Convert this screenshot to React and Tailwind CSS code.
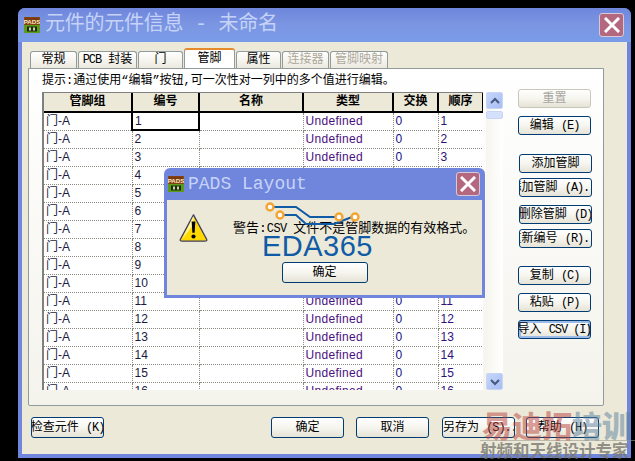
const cjk = { fontFamily: '"Liberation Mono","Noto Sans CJK SC",monospace' };

function L({ children }) {
  return <span className="text-[12px] tracking-[-1.1px]">{children}</span>;
}

function PadsIcon({ className }) {
  return (
    <svg viewBox="0 0 16 16" className={className}>
      <rect x="0" y="0" width="16" height="16" fill="#8a4a16" />
      <rect x="1" y="0.5" width="14" height="7" fill="#7a3a10" />
      <text x="8" y="6.6" textAnchor="middle" fontSize="6.2" fontWeight="700" fill="#ffe9c0" fontFamily="Liberation Sans">PADS</text>
      <rect x="0" y="8" width="16" height="8" fill="#5c9a1c" />
      <rect x="3" y="9.5" width="10" height="5" fill="#1c2c10" />
      <rect x="5" y="10.5" width="2" height="3" fill="#c8d8a0" />
      <rect x="9" y="10.5" width="2" height="3" fill="#c8d8a0" />
    </svg>
  );
}

function CloseBtn({ className }) {
  return (
    <div className={"flex items-center justify-center rounded-[3px] border border-[#d8c8d8] bg-[#b4687f] " + className}>
      <svg viewBox="0 0 16 16" className="h-[16px] w-[16px]">
        <path d="M2 2 L14 14 M14 2 L2 14" stroke="#ffffff" strokeWidth="3" strokeLinecap="square" />
      </svg>
    </div>
  );
}

function Btn({ children, className = "", disabled, def, center = true }) {
  return (
    <div
      style={cjk}
      className={
        "flex h-[19px] w-[73px] items-center overflow-hidden whitespace-nowrap rounded-[3px] border bg-gradient-to-b from-white via-[#f6f5ef] to-[#e6e3d6] text-[12px] leading-none " +
        (center ? "justify-center " : "") +
        (disabled ? "border-[#c9c7ba] text-[#a7a6a0] " : "border-[#003c74] text-black ") +
        (def ? "shadow-[inset_0_0_0_2px_#9dbbe8] " : "") +
        className
      }
    >
      <span className="shrink-0">{children}</span>
    </div>
  );
}

function Tab({ w, children, active, disabled }) {
  return (
    <div
      style={{ width: w, ...cjk }}
      className={
        "flex items-center justify-center whitespace-nowrap rounded-t-[3px] border border-b-0 text-[12px] leading-none " +
        (active
          ? "h-[20px] border-[#919b9c] border-t-[#e68b2c] border-t-2 bg-white text-black "
          : "h-[17px] border-[#919b9c] bg-gradient-to-b from-white to-[#ece9df] " + (disabled ? "text-[#aca899] " : "text-black "))
      }
    >
      {children}
    </div>
  );
}

const headers = ["管脚组", "编号", "名称", "类型", "交换", "顺序"];

const rows = Array.from({ length: 16 }, (_, i) => i + 1);

function GridTable() {
  return (
    <div className="h-[298px] w-[441px] overflow-hidden border-l-2 border-t border-l-[#808080] border-t-[#808080]">
      <table className="w-[439px] table-fixed border-collapse bg-white">
        <colgroup>
          <col className="w-[88px]" />
          <col className="w-[67px]" />
          <col className="w-[104px]" />
          <col className="w-[90px]" />
          <col className="w-[45px]" />
          <col className="w-[45px]" />
        </colgroup>
        <thead>
          <tr className="h-[19px]">
            {headers.map((h) => (
              <th
                key={h}
                style={cjk}
                className="border-b-2 border-r-2 border-black bg-[#ece9d8] p-0 text-center text-[12px] font-bold leading-none text-black"
              >
                {h}
              </th>
            ))}
          </tr>
        </thead>
        <tbody className="font-['Liberation_Sans',sans-serif] text-[12px] leading-none">
          {rows.map((n) => (
            <tr key={n} className="h-[18px]">
              <td className="border-b border-r border-dotted border-[#8a8a80] p-0 pl-[2px] text-[#1a1a40]" style={{ fontFamily: '"Liberation Sans","Noto Sans CJK SC",sans-serif' }}>门-A</td>
              <td className={"p-0 pl-[2px] text-[#1a1a40] " + (n === 1 ? "border-2 border-black" : "border-b border-r border-dotted border-[#8a8a80]")}>{n}</td>
              <td className="border-b border-r border-dotted border-[#8a8a80] p-0"></td>
              <td className="border-b border-r border-dotted border-[#8a8a80] p-0 pl-[2px] tracking-[0.3px] text-[#4b0f7f]">Undefined</td>
              <td className="border-b border-r border-dotted border-[#8a8a80] p-0 pl-[2px] text-[#10108a]">0</td>
              <td className="border-b border-r border-dotted border-[#8a8a80] p-0 pl-[2px] text-[#30107a]">{n}</td>
            </tr>
          ))}
        </tbody>
      </table>
    </div>
  );
}

function ScrollBtn({ down }) {
  return (
    <div className="flex h-[17px] w-[17px] items-center justify-center rounded-[2px] border border-[#c8d6f5] bg-gradient-to-br from-[#c6d6fb] to-[#a8bef2]">
      <svg viewBox="0 0 10 8" className="h-[8px] w-[10px]">
        <path d={down ? "M1 2 L5 6 L9 2" : "M1 6 L5 2 L9 6"} stroke="#44597f" strokeWidth="2" fill="none" />
      </svg>
    </div>
  );
}

function Scrollbar() {
  return (
    <div className="ml-[3px] flex h-[298px] w-[17px] flex-col bg-gradient-to-r from-[#f6f5ee] to-white">
      <ScrollBtn />
      <div className="mt-[2px] h-[8px] rounded-[2px] border border-[#c8d6f5] bg-[#d5e0fb]"></div>
      <div className="flex-1"></div>
      <ScrollBtn down />
    </div>
  );
}

function SideButtons() {
  return (
    <div className="ml-[15px] -mt-[3px] flex w-[74px] flex-col">
      <Btn disabled>重置</Btn>
      <Btn className="mt-[8px]">编辑 <L>(E)</L></Btn>
      <Btn className="ml-[1px] mt-[19px]">添加管脚</Btn>
      <Btn className="ml-[1px] mt-[5px]">添加管脚 <L>(A)...</L></Btn>
      <Btn className="ml-[1px] mt-[8px]">删除管脚 <L>(D)</L></Btn>
      <Btn className="ml-[1px] mt-[5px]">重新编号 <L>(R)...</L></Btn>
      <Btn className="mt-[18px]">复制 <L>(C)</L></Btn>
      <Btn className="mt-[8px]">粘贴 <L>(P)</L></Btn>
      <Btn className="mt-[8px]" def>导入 <L>CSV (I)</L></Btn>
    </div>
  );
}

function Dialog() {
  return (
    <div className="absolute left-[164px] top-[168px] h-[130px] w-[321px] rounded-t-[6px] bg-[#6f86dc] px-[3px] pb-[3px]">
      <div className="flex h-[32px] items-center">
        <PadsIcon className="ml-[1px] h-[16px] w-[16px]" />
        <span className="ml-[4px] whitespace-nowrap font-['Liberation_Mono',monospace] text-[18px] leading-none text-[#c6d3f8]">PADS Layout</span>
        <CloseBtn className="ml-auto mr-[2px] h-[24px] w-[24px]" />
      </div>
      <div className="relative flex h-[95px] flex-col items-center bg-[#ece9d8]">
        <div className="flex w-full items-center pl-[11px] pt-[13px]">
          <svg viewBox="0 0 32 32" className="h-[30px] w-[31px]">
            <path d="M16 2 L30 28 Q31 30 28 30 L4 30 Q1 30 2 28 Z" fill="#ffd800" stroke="#3c3c6a" strokeWidth="1.4" strokeLinejoin="round" />
            <path d="M16 3 L4 28 L16 12 Z" fill="#fff6a8" />
            <path d="M14 9 h4 l-0.8 12 h-2.4 Z" fill="#000" />
            <circle cx="16" cy="25" r="2.2" fill="#000" />
          </svg>
          <span style={cjk} className="ml-[24px] whitespace-nowrap text-[13px] leading-none text-black">警告:<span className="text-[12px] tracking-[-0.6px]">CSV </span>文件不是管脚数据的有效格式。</span>
        </div>
        <div className="-mt-[7px] h-[21px] -translate-x-[7px] font-['Liberation_Sans',sans-serif] text-[29px] font-normal leading-[21px] tracking-[0.5px] text-[#0f5ba6]">EDA365</div>
        <Btn className="mt-[5px] h-[21px] w-[86px]">确定</Btn>
        <svg className="absolute left-[97px] top-0 h-[30px] w-[100px]" viewBox="0 0 100 30" fill="none">
          <path d="M6 7 H32 L46 17 H76" stroke="#0f5ba6" strokeWidth="2" />
          <path d="M16 15 H32 L42 24 H70 L88 17" stroke="#0f5ba6" strokeWidth="2" />
          <circle cx="6" cy="7" r="3.5" fill="#fff" stroke="#f3a431" strokeWidth="2.4" />
          <circle cx="16" cy="15" r="3.5" fill="#fff" stroke="#f3a431" strokeWidth="2.4" />
          <circle cx="75" cy="17" r="3.5" fill="#fff" stroke="#f3a431" strokeWidth="2.4" />
          <circle cx="91" cy="17" r="3.5" fill="#fff" stroke="#f3a431" strokeWidth="2.4" />
        </svg>
      </div>
    </div>
  );
}

function Watermark() {
  return (
    <div className="absolute left-[480px] top-[408px] w-[155px] overflow-hidden" style={{ fontFamily: '"Noto Sans CJK SC",sans-serif' }}>
      <div className="flex h-[31px] items-center whitespace-nowrap pl-[2px] text-[30px] font-black leading-none">
        <span className="text-[#b8413a]/50">易迪拓</span>
        <span className="text-[#5a7f9c]/50">培训</span>
      </div>
      <div className="mt-[1px] h-px w-full bg-[#9a9a90]/60"></div>
      <div className="whitespace-nowrap text-[16.5px] font-bold leading-[19px] text-[#77776f]/80">射频和天线设计专家</div>
    </div>
  );
}

export default function App() {
  return (
    <div className="relative h-[461px] w-[635px] overflow-hidden bg-black pl-[18px] pt-[8px]">
      <div className="h-[450px] w-[613px] rounded-t-[7px] bg-[#6f86dc] px-[4px] pb-[4px]">
        <div className="-mx-[4px] flex h-[34px] items-center rounded-t-[7px] bg-gradient-to-b from-[#6f86dc] via-[#7b96e2] to-[#7a9ce8] px-[6px]">
          <PadsIcon className="h-[16px] w-[16px]" />
          <span className="ml-[5px] whitespace-nowrap text-[20px] leading-none tracking-[-0.25px] text-[#c6d3f8]" style={cjk}>元件的元件信息 - 未命名</span>
          <CloseBtn className="ml-auto mr-[1px] h-[24px] w-[25px]" />
        </div>
        <div className="h-[412px] bg-[#ece9d8] pl-[6px] pt-[7px]">
          <div className="flex h-[19px] items-end gap-[1px] pl-[2px]">
            <Tab w={47}>常规</Tab>
            <Tab w={59}><L>PCB</L>&nbsp;封装</Tab>
            <Tab w={45}>门</Tab>
            <Tab w={51} active>管脚</Tab>
            <Tab w={45}>属性</Tab>
            <Tab w={47} disabled>连接器</Tab>
            <Tab w={58} disabled>管脚映射</Tab>
          </div>
          <div className="h-[338px] w-[576px] rounded-b-[2px] border border-[#919b9c] bg-gradient-to-b from-white to-[#f4f3ec] pl-[13px]">
            <div style={cjk} className="flex h-[23px] items-center whitespace-nowrap text-[12px] leading-none text-black">提示:通过使用“编辑”按钮,可一次性对一列中的多个值进行编辑。</div>
            <div className="flex">
              <GridTable />
              <Scrollbar />
              <SideButtons />
            </div>
          </div>
          <div className="flex pl-[3px] pt-[11px]">
            <Btn className="h-[21px]">检查元件 <L>(K)</L></Btn>
            <Btn className="ml-[167px] h-[21px]">确定</Btn>
            <Btn className="ml-[12px] h-[21px]">取消</Btn>
            <Btn className="ml-[13px] h-[21px]" center={false}>另存为 <L>(S)...</L></Btn>
            <Btn className="ml-[11px] h-[21px]">帮助 <L>(H)</L></Btn>
          </div>
        </div>
      </div>
      <Dialog />
      <Watermark />
    </div>
  );
}
